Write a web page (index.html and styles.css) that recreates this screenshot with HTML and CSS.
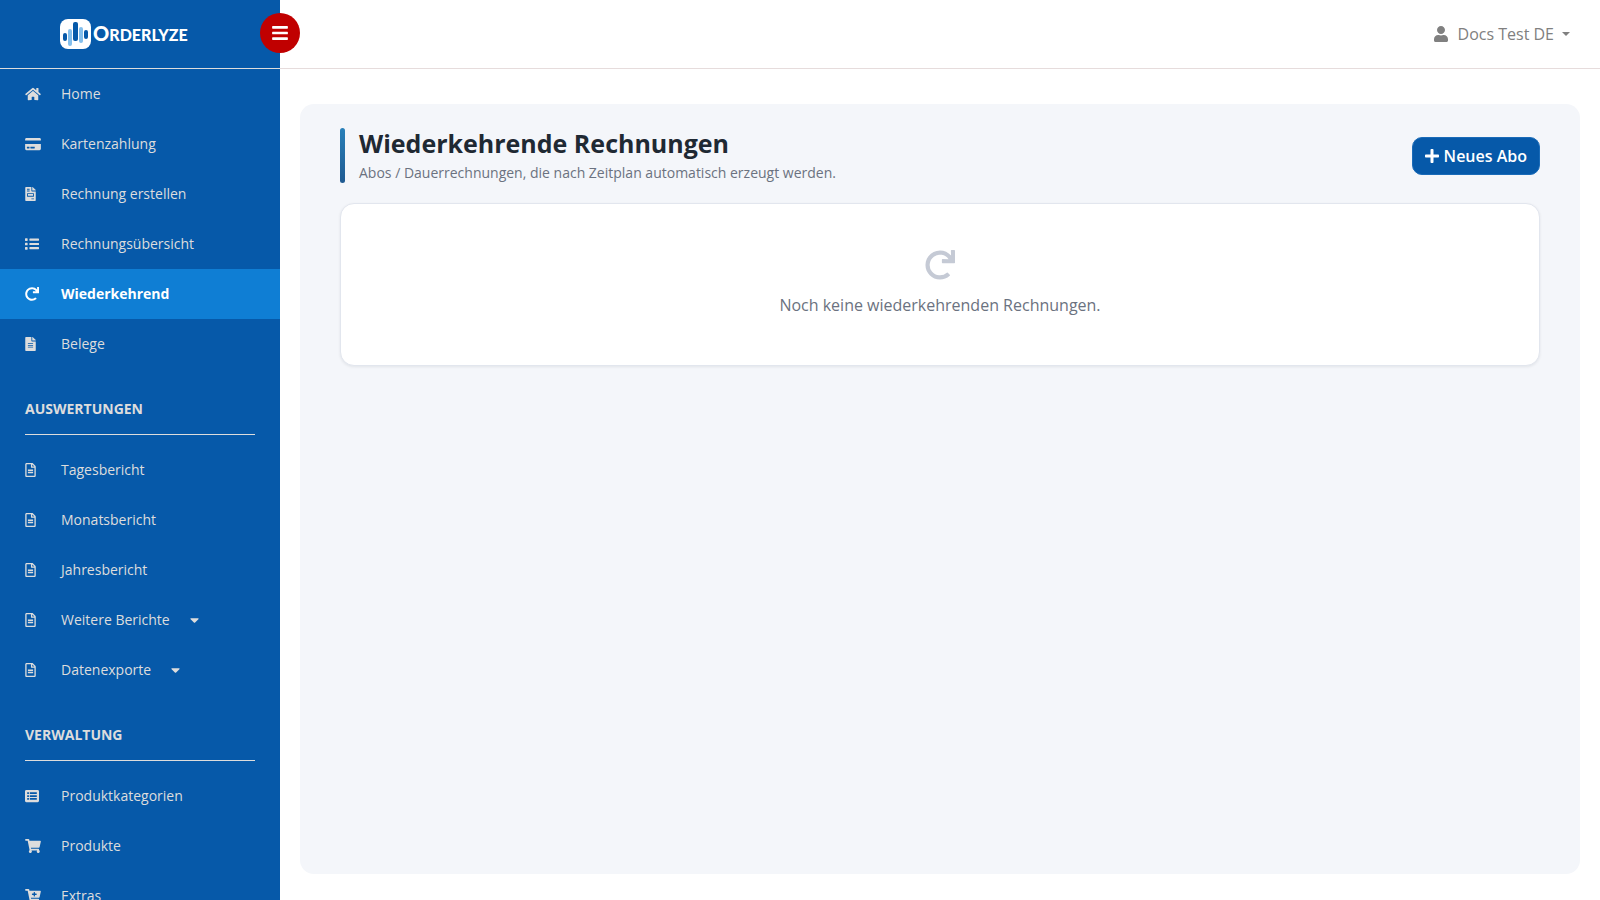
FILE: index.html
```html
<!DOCTYPE html>
<html lang="de">
<head>
    <meta charset="UTF-8">
    <meta name="viewport" content="width=device-width, initial-scale=1.0">
    <title>Wiederkehrende Rechnungen - Orderlyze</title>
    <link rel="stylesheet" href="styles.css">
</head>
<body>
    <!-- Icons -->
    <svg class="sprite" aria-hidden="true">
        <symbol id="home" viewBox="0 0 576 512"><path d="M280.37 148.26L96 300.11V464a16 16 0 0 0 16 16l112.06-.29a16 16 0 0 0 15.92-16V368a16 16 0 0 1 16-16h64a16 16 0 0 1 16 16v95.64a16 16 0 0 0 16 16.05L464 480a16 16 0 0 0 16-16V300L295.67 148.26a12.19 12.19 0 0 0-15.3 0zM571.6 251.47L488 182.56V44.05a12 12 0 0 0-12-12h-56a12 12 0 0 0-12 12v72.61L318.47 43a48 48 0 0 0-61 0L4.34 251.47a12 12 0 0 0-1.6 16.9l25.5 31A12 12 0 0 0 45.15 301l235.22-193.74a12.19 12.19 0 0 1 15.3 0L530.9 301a12 12 0 0 0 16.9-1.6l25.5-31a12 12 0 0 0-1.7-16.93z"/></symbol>
        <symbol id="card" viewBox="0 0 576 512"><path d="M0 432c0 26.5 21.5 48 48 48h480c26.5 0 48-21.5 48-48V256H0v176zm192-68c0-6.600 5.400-12 12-12h136c6.600 0 12 5.400 12 12v40c0 6.600-5.400 12-12 12H204c-6.600 0-12-5.400-12-12v-40zm-128 0c0-6.600 5.400-12 12-12h72c6.600 0 12 5.400 12 12v40c0 6.600-5.400 12-12 12H76c-6.600 0-12-5.400-12-12v-40zM576 80v48H0V80c0-26.500 21.500-48 48-48h480c26.500 0 48 21.500 48 48z"/></symbol>
        <symbol id="invoice" viewBox="0 0 384 512"><path d="M288 256H96v64h192v-64zm89-151L279.100 7c-4.500-4.500-10.600-7-17-7H256v128h128v-6.100c0-6.300-2.500-12.400-7-16.900zm-153 31V0H24C10.700 0 0 10.700 0 24v464c0 13.300 10.700 24 24 24h336c13.300 0 24-10.700 24-24V160H248c-13.200 0-24-10.800-24-24zM64 72c0-4.420 3.580-8 8-8h80c4.420 0 8 3.580 8 8v16c0 4.420-3.580 8-8 8H72c-4.420 0-8-3.580-8-8V72zm0 64c0-4.420 3.580-8 8-8h80c4.420 0 8 3.580 8 8v16c0 4.420-3.580 8-8 8H72c-4.420 0-8-3.580-8-8v-16zm256 304c0 4.420-3.580 8-8 8h-80c-4.420 0-8-3.580-8-8v-16c0-4.420 3.580-8 8-8h80c4.420 0 8 3.580 8 8v16zm0-200v96c0 8.840-7.160 16-16 16H80c-8.840 0-16-7.160-16-16v-96c0-8.840 7.160-16 16-16h224c8.840 0 16 7.160 16 16z"/></symbol>
        <symbol id="list" viewBox="0 0 512 512"><path d="M80 368H16a16 16 0 0 0-16 16v64a16 16 0 0 0 16 16h64a16 16 0 0 0 16-16v-64a16 16 0 0 0-16-16zm0-320H16A16 16 0 0 0 0 64v64a16 16 0 0 0 16 16h64a16 16 0 0 0 16-16V64a16 16 0 0 0-16-16zm0 160H16a16 16 0 0 0-16 16v64a16 16 0 0 0 16 16h64a16 16 0 0 0 16-16v-64a16 16 0 0 0-16-16zm416 160H176a16 16 0 0 0-16 16v48a16 16 0 0 0 16 16h320a16 16 0 0 0 16-16v-48a16 16 0 0 0-16-16zm0-310H176a16 16 0 0 0-16 16v48a16 16 0 0 0 16 16h320a16 16 0 0 0 16-16V74a16 16 0 0 0-16-16zm0 158H176a16 16 0 0 0-16 16v48a16 16 0 0 0 16 16h320a16 16 0 0 0 16-16v-48a16 16 0 0 0-16-16z"/></symbol>
        <symbol id="redo" viewBox="0 0 512 512"><path d="M500.33 0h-47.41a12 12 0 0 0-12 12.570l4 82.760A247.420 247.420 0 0 0 256 8C119.340 8 7.900 119.530 8 256.190 8.100 393.070 119.100 504 256 504a247.100 247.100 0 0 0 166.180-63.910 12 12 0 0 0 .48-17.430l-34-34a12 12 0 0 0-16.380-.55A176 176 0 1 1 402.100 157.800l-101.530-4.870a12 12 0 0 0-12.570 12v47.410a12 12 0 0 0 12 12h200.330a12 12 0 0 0 12-12V12a12 12 0 0 0-12-12z"/></symbol>
        <symbol id="file" viewBox="0 0 384 512"><path d="M224 136V0H24C10.700 0 0 10.700 0 24v464c0 13.300 10.700 24 24 24h336c13.300 0 24-10.700 24-24V160H248c-13.200 0-24-10.800-24-24zm64 236c0 6.600-5.400 12-12 12H108c-6.600 0-12-5.400-12-12v-8c0-6.600 5.400-12 12-12h168c6.600 0 12 5.400 12 12v8zm0-64c0 6.600-5.400 12-12 12H108c-6.600 0-12-5.400-12-12v-8c0-6.600 5.400-12 12-12h168c6.600 0 12 5.400 12 12v8zm0-72v8c0 6.600-5.400 12-12 12H108c-6.600 0-12-5.400-12-12v-8c0-6.600 5.400-12 12-12h168c6.600 0 12 5.400 12 12zm96-114.100v6.100H256V0h6.100c6.400 0 12.500 2.500 17 7l97.900 98c4.500 4.500 7 10.600 7 16.900z"/></symbol>
        <symbol id="report" viewBox="0 0 384 512"><path d="M288 248v28c0 6.600-5.400 12-12 12H108c-6.600 0-12-5.400-12-12v-28c0-6.600 5.400-12 12-12h168c6.600 0 12 5.400 12 12zm-12 72H108c-6.600 0-12 5.400-12 12v28c0 6.600 5.400 12 12 12h168c6.600 0 12-5.400 12-12v-28c0-6.600-5.400-12-12-12zm108-188.100V464c0 26.500-21.500 48-48 48H48c-26.500 0-48-21.500-48-48V48C0 21.500 21.500 0 48 0h204.100C264.800 0 277 5.100 286 14.100L369.900 98c9 8.900 14.100 21.200 14.100 33.900zm-128-80V128h76.100L256 51.900zM336 464V176H232c-13.300 0-24-10.700-24-24V48H48v416h288z"/></symbol>
        <symbol id="table" viewBox="0 0 512 512"><path fill-rule="evenodd" d="M48 32h416c26.500 0 48 21.500 48 48v352c0 26.500-21.500 48-48 48H48c-26.500 0-48-21.500-48-48V80c0-26.500 21.500-48 48-48zM80 120v64h64v-64zM176 120v64h256v-64zM80 224v64h64v-64zM176 224v64h256v-64zM80 328v64h64v-64zM176 328v64h256v-64z"/></symbol>
        <symbol id="cart" viewBox="0 0 576 512"><path d="M528.120 301.319l47.273-208C578.806 78.301 567.391 64 551.990 64H159.208l-9.166-44.810C147.758 8.021 137.930 0 126.529 0H24C10.745 0 0 10.745 0 24v16c0 13.255 10.745 24 24 24h69.883l70.248 343.435C147.325 417.100 136 435.222 136 456c0 30.928 25.072 56 56 56s56-25.072 56-56c0-15.674-6.447-29.835-16.824-40h209.647C430.447 426.165 424 440.326 424 456c0 30.928 25.072 56 56 56s56-25.072 56-56c0-22.172-12.888-41.332-31.579-50.405l5.517-24.276c3.413-15.018-8.002-29.319-23.403-29.319H218.117l-6.545-32h293.145c11.206 0 20.920-7.754 23.403-18.681z"/></symbol>
        <symbol id="cart-plus" viewBox="0 0 576 512"><path d="M504.717 320H211.572l6.545 32h268.418c15.401 0 26.816 14.301 23.403 29.319l-5.517 24.276C523.112 414.668 536 433.828 536 456c0 31.202-25.519 56.444-56.824 55.994-29.823-.429-54.350-24.631-55.155-54.447-.44-16.287 6.085-31.049 16.803-41.548H231.176C241.553 426.165 248 440.326 248 456c0 31.813-26.528 57.431-58.670 55.938-28.540-1.325-51.751-24.385-53.251-52.917-1.158-22.034 10.436-41.455 28.051-51.586L93.883 64H24C10.745 64 0 53.255 0 40V24C0 10.745 10.745 0 24 0h102.529c11.401 0 21.228 8.021 23.513 19.190L159.208 64H551.990c15.401 0 26.816 14.301 23.403 29.319l-47.273 208C525.637 312.246 515.923 320 504.717 320zM408 168h-48v-40c0-8.837-7.163-16-16-16h-16c-8.837 0-16 7.163-16 16v40h-48c-8.837 0-16 7.163-16 16v16c0 8.837 7.163 16 16 16h48v40c0 8.837 7.163 16 16 16h16c8.837 0 16-7.163 16-16v-40h48c8.837 0 16-7.163 16-16v-16c0-8.837-7.163-16-16-16z"/></symbol>
        <symbol id="caret" viewBox="0 0 320 512"><path d="M31.300 192h257.300c17.800 0 26.700 21.500 14.100 34.100L174.100 354.800c-7.800 7.800-20.500 7.800-28.300 0L17.200 226.100C4.600 213.500 13.500 192 31.300 192z"/></symbol>
        <symbol id="bars" viewBox="0 0 448 512"><path d="M16 132h416c8.837 0 16-7.163 16-16V76c0-8.837-7.163-16-16-16H16C7.163 60 0 67.163 0 76v40c0 8.837 7.163 16 16 16zm0 160h416c8.837 0 16-7.163 16-16v-40c0-8.837-7.163-16-16-16H16c-8.837 0-16 7.163-16 16v40c0 8.837 7.163 16 16 16zm0 160h416c8.837 0 16-7.163 16-16v-40c0-8.837-7.163-16-16-16H16c-8.837 0-16 7.163-16 16v40c0 8.837 7.163 16 16 16z"/></symbol>
        <symbol id="user" viewBox="0 0 448 512"><path d="M224 256c70.700 0 128-57.300 128-128S294.700 0 224 0 96 57.300 96 128s57.300 128 128 128zm89.600 32h-16.700c-22.200 10.200-46.900 16-72.900 16s-50.600-5.800-72.900-16h-16.700C60.200 288 0 348.200 0 422.400V464c0 26.500 21.500 48 48 48h352c26.500 0 48-21.500 48-48v-41.600c0-74.200-60.200-134.400-134.400-134.400z"/></symbol>
        <symbol id="plus" viewBox="0 0 448 512"><path d="M416 208H272V64c0-17.670-14.330-32-32-32h-32c-17.670 0-32 14.330-32 32v144H32c-17.670 0-32 14.330-32 32v32c0 17.670 14.330 32 32 32h144v144c0 17.670 14.330 32 32 32h32c17.670 0 32-14.330 32-32V304h144c17.670 0 32-14.330 32-32v-32c0-17.670-14.330-32-32-32z"/></symbol>
    </svg>

    <aside class="sidebar">
        <a class="brand" href="#">
            <svg class="brand-mark" viewBox="0 0 31 30">
                <rect width="31" height="30" rx="8" fill="#fff"/>
                <rect x="3" y="14" width="4" height="8" rx="2" fill="#0659a9"/>
                <rect x="8" y="10" width="4" height="17" rx="2" fill="#84bfec"/>
                <rect x="13" y="3" width="5" height="19" rx="2" fill="#0659a9"/>
                <rect x="19" y="8" width="4" height="16" rx="2" fill="#84bfec"/>
                <rect x="24" y="11" width="4" height="9" rx="2" fill="#0659a9"/>
            </svg>
            <span class="brand-name">Orderlyze</span>
        </a>

        <nav class="menu">
            <a class="menu-item" href="#"><span class="menu-icon"><svg class="icon wide"><use href="#home"/></svg></span>Home</a>
            <a class="menu-item" href="#"><span class="menu-icon"><svg class="icon wide"><use href="#card"/></svg></span>Kartenzahlung</a>
            <a class="menu-item" href="#"><span class="menu-icon"><svg class="icon narrow"><use href="#invoice"/></svg></span>Rechnung erstellen</a>
            <a class="menu-item" href="#"><span class="menu-icon"><svg class="icon"><use href="#list"/></svg></span>Rechnungsübersicht</a>
            <a class="menu-item active" href="#"><span class="menu-icon"><svg class="icon"><use href="#redo"/></svg></span>Wiederkehrend</a>
            <a class="menu-item" href="#"><span class="menu-icon"><svg class="icon narrow"><use href="#file"/></svg></span>Belege</a>

            <h2 class="menu-title">Auswertungen</h2>
            <a class="menu-item" href="#"><span class="menu-icon"><svg class="icon narrow"><use href="#report"/></svg></span>Tagesbericht</a>
            <a class="menu-item" href="#"><span class="menu-icon"><svg class="icon narrow"><use href="#report"/></svg></span>Monatsbericht</a>
            <a class="menu-item" href="#"><span class="menu-icon"><svg class="icon narrow"><use href="#report"/></svg></span>Jahresbericht</a>
            <a class="menu-item" href="#"><span class="menu-icon"><svg class="icon narrow"><use href="#report"/></svg></span>Weitere Berichte<svg class="icon menu-caret"><use href="#caret"/></svg></a>
            <a class="menu-item" href="#"><span class="menu-icon"><svg class="icon narrow"><use href="#report"/></svg></span>Datenexporte<svg class="icon menu-caret"><use href="#caret"/></svg></a>

            <h2 class="menu-title">Verwaltung</h2>
            <a class="menu-item" href="#"><span class="menu-icon"><svg class="icon"><use href="#table"/></svg></span>Produktkategorien</a>
            <a class="menu-item" href="#"><span class="menu-icon"><svg class="icon wide"><use href="#cart"/></svg></span>Produkte</a>
            <a class="menu-item" href="#"><span class="menu-icon"><svg class="icon wide"><use href="#cart-plus"/></svg></span>Extras</a>
        </nav>
    </aside>

    <div class="page">
        <header class="topbar">
            <button class="toggle" type="button" aria-label="Menü"><svg class="toggle-icon"><use href="#bars"/></svg></button>
            <button class="user" type="button">
                <svg class="user-icon"><use href="#user"/></svg>
                <span>Docs Test DE</span>
                <span class="user-caret"></span>
            </button>
        </header>

        <main class="content">
            <div class="content-head">
                <div class="heading">
                    <h1>Wiederkehrende Rechnungen</h1>
                    <p>Abos / Dauerrechnungen, die nach Zeitplan automatisch erzeugt werden.</p>
                </div>
                <button class="btn-primary" type="button"><svg class="btn-icon"><use href="#plus"/></svg>Neues Abo</button>
            </div>

            <section class="empty">
                <svg class="empty-icon"><use href="#redo"/></svg>
                <p>Noch keine wiederkehrenden Rechnungen.</p>
            </section>
        </main>
    </div>
</body>
</html>
```

FILE: styles.css
```css
* {
    box-sizing: border-box;
}

body {
    margin: 0;
    height: 100vh;
    display: flex;
    overflow: hidden;
    background-color: #fff;
    font-family: "Open Sans", sans-serif;
    font-size: 16px;
    line-height: 24px;
}

h1, h2, p {
    margin: 0;
}

a {
    text-decoration: none;
}

button {
    font-family: inherit;
    font-size: 16px;
    line-height: 24px;
    cursor: pointer;
}

svg {
    fill: currentColor;
    flex-shrink: 0;
}

.sprite {
    display: none;
}

/* Sidebar */
.sidebar {
    width: 280px;
    flex-shrink: 0;
    overflow-y: auto;
    scrollbar-width: none;
    background-color: #0659a9;
    color: #ddd;
}

.brand {
    display: flex;
    align-items: center;
    gap: 2px;
    height: 69px;
    padding-left: 60px;
    border-bottom: 1px solid #ddd;
    color: #fff;
}

.brand-mark {
    width: 31px;
    height: 30px;
}

.brand-name {
    display: block;
    font-family: Lato, sans-serif;
    font-size: 16px;
    font-weight: 900;
    text-transform: uppercase;
}

.brand-name::first-letter {
    font-size: 20px;
}

.menu-item {
    display: flex;
    align-items: center;
    height: 50px;
    padding: 0 25px;
    color: #ddd;
    font-size: 14px;
}

.menu-item.active {
    background-color: #0f7ed4;
    color: #fff;
    font-weight: 700;
}

.menu-icon {
    display: flex;
    width: 36px;
}

.icon {
    width: 14px;
    height: 14px;
}

.icon.wide {
    width: 16px;
}

.icon.narrow {
    width: 11px;
}

.menu-caret {
    width: 9px;
    margin-left: 20px;
}

.menu-title {
    margin: 0 25px 10px;
    padding: 29px 0 15px;
    border-bottom: 1px solid #ddd;
    font-size: 14px;
    font-weight: 700;
    line-height: 21px;
    text-transform: uppercase;
}

/* Page */
.page {
    flex: 1;
    min-width: 0;
    display: flex;
    flex-direction: column;
}

.topbar {
    position: relative;
    display: flex;
    align-items: center;
    justify-content: flex-end;
    height: 69px;
    padding-right: 30px;
    border-bottom: 1px solid #e6dcdc;
}

.toggle {
    position: absolute;
    top: 13px;
    left: -20px;
    display: flex;
    align-items: center;
    justify-content: center;
    width: 40px;
    height: 40px;
    padding: 0;
    border: none;
    border-radius: 50%;
    background-color: #c00000;
    color: #fff;
}

.toggle-icon {
    width: 16px;
    height: 18px;
}

.user {
    display: flex;
    align-items: center;
    padding: 0;
    border: none;
    background: none;
    color: #808080;
}

.user-icon {
    width: 14px;
    height: 16px;
    margin-right: 10px;
}

.user-caret {
    margin-left: 8px;
    border-top: 4px solid;
    border-right: 4px solid transparent;
    border-left: 4px solid transparent;
}

.content {
    flex: 1;
    margin: 35px 20px 26px;
    padding: 24px 40px;
    border-radius: 14px;
    background-color: #f4f6fa;
}

.content-head {
    display: flex;
    align-items: center;
    justify-content: space-between;
    margin-bottom: 20px;
}

.heading {
    position: relative;
    padding-left: 19px;
}

.heading::before {
    content: "";
    position: absolute;
    top: 0;
    bottom: 0;
    left: 0;
    width: 5px;
    border-radius: 3px;
    background: linear-gradient(180deg, #2980b9, #1f5a91);
}

.heading h1 {
    color: #1f2933;
    font-size: 25px;
    font-weight: 700;
    line-height: 30px;
}

.heading p {
    margin-top: 4px;
    color: #6b7280;
    font-size: 14px;
    line-height: 21px;
}

.btn-primary {
    display: flex;
    align-items: center;
    gap: 5px;
    padding: 6px 12px;
    border: 1px solid #1a6bb8;
    border-radius: 10px;
    background-color: #0659a9;
    color: #fff;
    font-weight: 600;
}

.btn-icon {
    width: 14px;
    height: 16px;
}

.empty {
    display: flex;
    flex-direction: column;
    align-items: center;
    gap: 13px;
    padding: 46px 20px 48px;
    border: 1px solid #e2e6ee;
    border-radius: 14px;
    background-color: #fff;
    box-shadow: 0 1px 3px rgba(16, 24, 40, 0.08);
    color: #6b7280;
}

.empty-icon {
    width: 30px;
    height: 30px;
    color: #c5cad5;
}
```
